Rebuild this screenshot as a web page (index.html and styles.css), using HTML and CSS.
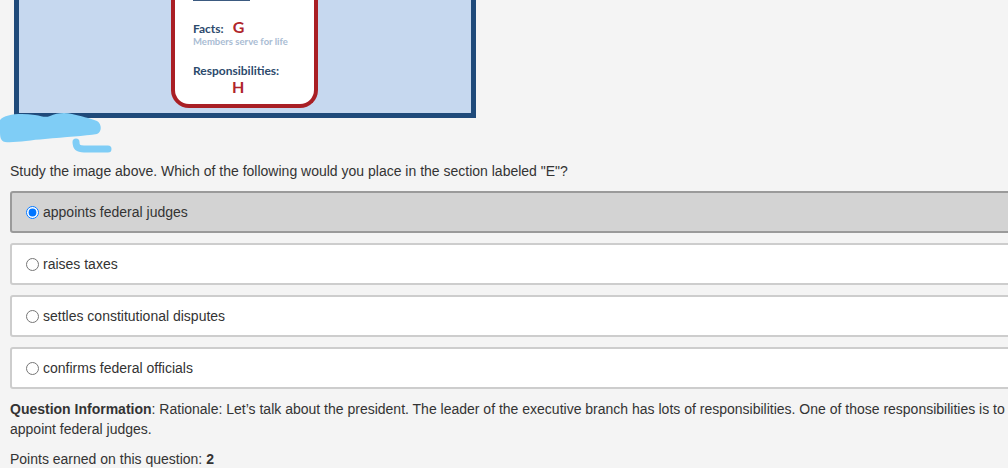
FILE: index.html
```html
<!DOCTYPE html>
<html>
<head>
<meta charset="utf-8">
<link rel="stylesheet" href="styles.css">
</head>
<body>
<div class="page">
  <div class="figure">
    <div class="card">
      <div class="branch-row"><span class="blank"></span><span class="branch">Branch</span></div>
      <div class="facts-row"><span class="label">Facts:</span><span class="letter">G</span></div>
      <div class="note">Members serve for life</div>
      <div class="label resp">Responsibilities:</div>
      <div class="letter h">H</div>
    </div>
  </div>
  <svg class="scribble" width="115" height="50" viewBox="0 0 115 50">
    <path d="M0 10 C5 4 20 3 35 5 C42 6 45 8 50 6 C56 3 65 2 72 4 C80 6 90 8 97 11 C102 14 102 22 97 24 C85 26 65 27 45 29 C30 30 15 33 5 32 C0 31 0 26 0 20 Z" fill="#7fcdf6"/>
    <path d="M76 32 C76 37 78 39 84 39 L108 39" fill="none" stroke="#7fcdf6" stroke-width="7" stroke-linecap="round"/>
  </svg>

  <p class="prompt">Study the image above. Which of the following would you place in the section labeled "E"?</p>

  <div class="options">
    <label class="option selected"><input type="radio" name="q" checked><span>appoints federal judges</span></label>
    <label class="option"><input type="radio" name="q"><span>raises taxes</span></label>
    <label class="option"><input type="radio" name="q"><span>settles constitutional disputes</span></label>
    <label class="option"><input type="radio" name="q"><span>confirms federal officials</span></label>
  </div>

  <p class="info"><b>Question Information</b>: Rationale: Let’s talk about the president. The leader of the executive branch has lots of responsibilities. One of those responsibilities is to appoint federal judges.</p>
  <p class="points">Points earned on this question: <b>2</b></p>
</div>
</body>
</html>
```

FILE: styles.css
```css
html, body {
  margin: 0;
  padding: 0;
  overflow: hidden;
  background: #f4f4f4;
}

.page {
  position: relative;
  width: 1040px;
  padding-left: 10px;
  font-family: "Liberation Sans", Arial, sans-serif;
  font-size: 14px;
  line-height: 20px;
  color: #333;
}

.figure {
  margin-left: 4px;
  width: 462px;
  height: 118px;
  box-sizing: border-box;
  border: 5px solid #1f4a7a;
  border-top: 0;
  background: #c6d8ef;
  overflow: hidden;
}

.card {
  display: flow-root;
  margin-left: 152px;
  width: 147px;
  height: 108px;
  box-sizing: border-box;
  border: 4px solid #a91f25;
  border-top: 0;
  border-radius: 0 0 18px 18px;
  background: #fff;
  padding-left: 18px;
  font-family: Lato, "Open Sans", sans-serif;
  color: #2c4a6c;
  line-height: 1;
}

.branch-row {
  display: flex;
  align-items: flex-end;
  gap: 5px;
  margin-top: -8px;
  height: 9px;
}

.blank {
  width: 57px;
  border-bottom: 2px solid #3b5a80;
}

.branch {
  font-size: 11px;
  font-weight: 700;
  color: #8fa4be;
}

.facts-row {
  display: flex;
  align-items: baseline;
  gap: 9px;
  margin-top: 18px;
}

.label {
  font-size: 12px;
  font-weight: 700;
}

.letter {
  font-size: 16px;
  font-weight: 700;
  color: #b0252b;
}

.note {
  margin-top: 2px;
  font-size: 9.5px;
  font-weight: 700;
  color: #a9bcd3;
}

.resp {
  margin-top: 18px;
}

.h {
  margin-top: 2px;
  padding-left: 39px;
}

.scribble {
  position: absolute;
  left: 0;
  top: 110px;
}

.prompt {
  margin: 43px 0 10px;
}

.options {
  display: flex;
  flex-direction: column;
  gap: 10px;
}

.option {
  display: flex;
  align-items: center;
  height: 42px;
  box-sizing: border-box;
  padding-left: 14px;
  border: 2px solid #cdcdcd;
  border-radius: 3px;
  background: #fff;
}

.option.selected {
  background: #d3d3d3;
  border-color: #9a9a9a;
}

.option input {
  width: 13px;
  height: 13px;
  margin: 0 4px 0 0;
}

.info {
  width: 1000px;
  margin: 10px 0 0;
}

.points {
  margin: 10px 0 0;
}
```
